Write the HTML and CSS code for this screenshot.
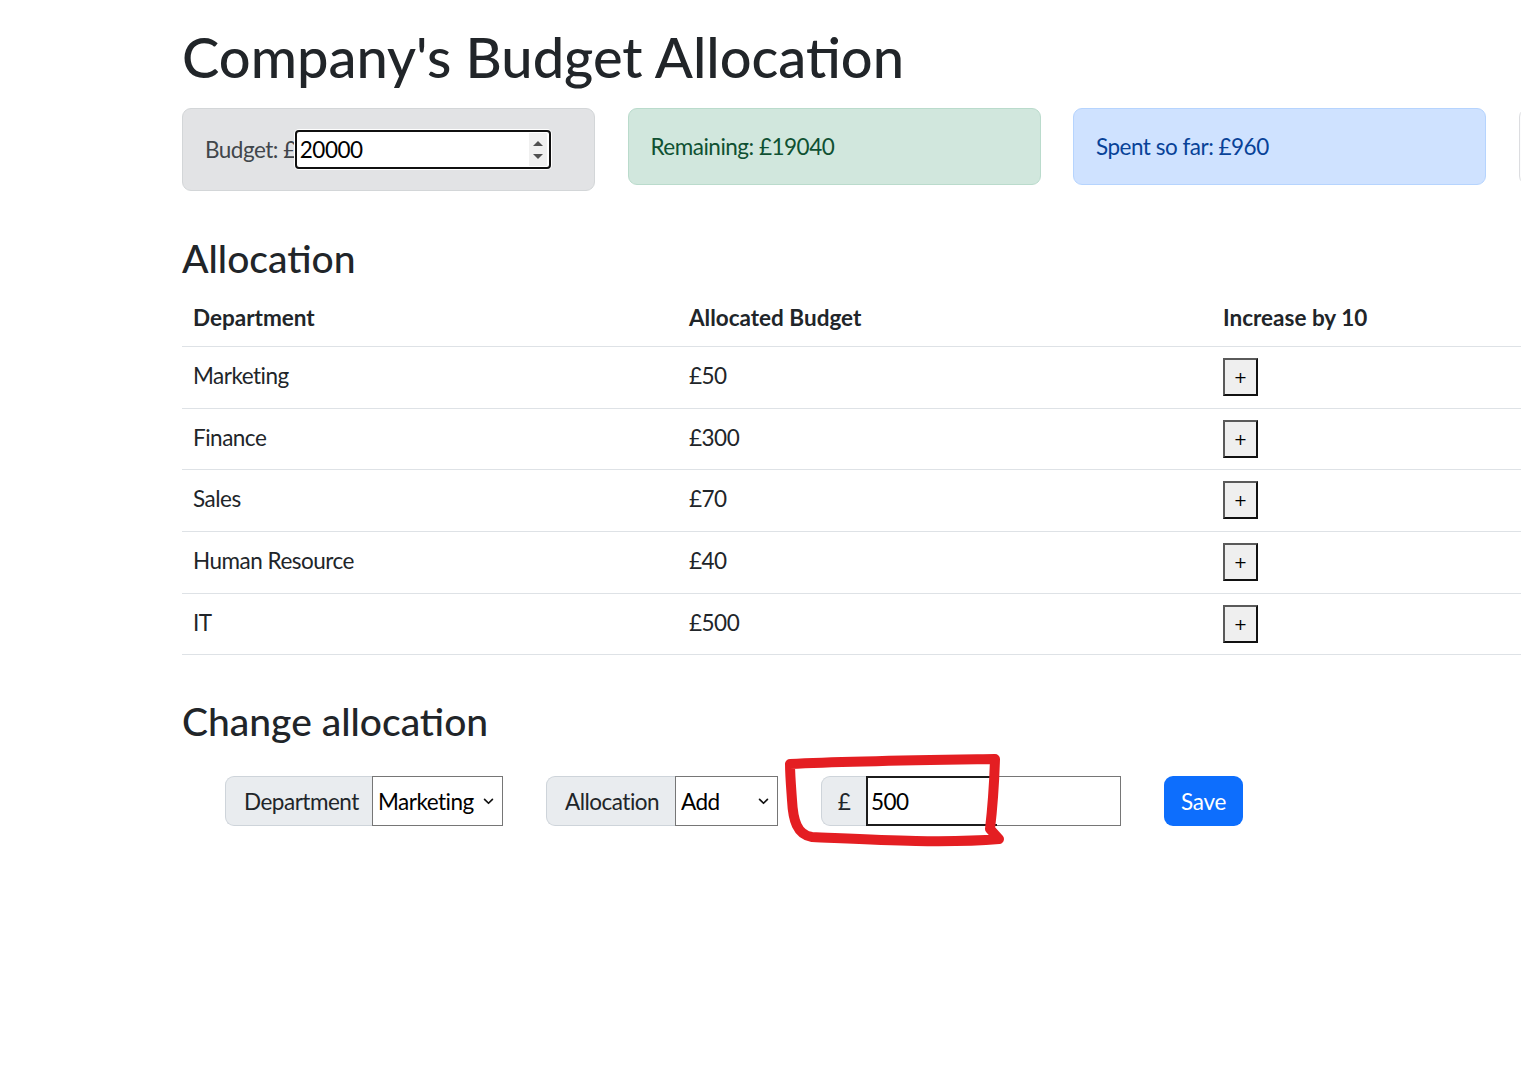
FILE: index.html
```html
<!DOCTYPE html>
<html lang="en">
<head>
<meta charset="utf-8">
<title>Company's Budget Allocation</title>
<link rel="stylesheet" href="styles.css">
</head>
<body>
<div class="page">
  <h1 class="title">Company's Budget Allocation</h1>

  <div class="cards">
    <div class="card card-budget">
      <span class="card-label">Budget: £</span>
      <span class="num-wrap">
        <input class="num-input" type="text" value="20000">
        <span class="spinner"><span class="tri-up"></span><span class="tri-down"></span></span>
      </span>
    </div>
    <div class="card card-remaining">Remaining: £19040</div>
    <div class="card card-spent">Spent so far: £960</div>
    <div class="card card-extra"></div>
  </div>

  <h3 class="section">Allocation</h3>
  <table class="alloc">
    <thead>
      <tr><th class="c1">Department</th><th class="c2">Allocated Budget</th><th class="c3">Increase by 10</th></tr>
    </thead>
    <tbody>
      <tr><td>Marketing</td><td>£50</td><td><button class="plus">+</button></td></tr>
      <tr><td>Finance</td><td>£300</td><td><button class="plus">+</button></td></tr>
      <tr><td>Sales</td><td>£70</td><td><button class="plus">+</button></td></tr>
      <tr><td>Human Resource</td><td>£40</td><td><button class="plus">+</button></td></tr>
      <tr><td>IT</td><td>£500</td><td><button class="plus">+</button></td></tr>
    </tbody>
  </table>

  <h3 class="section section-change">Change allocation</h3>
  <div class="form-row">
    <div class="igroup">
      <span class="ig-text ig-dept">Department</span>
      <span class="sel-wrap sel-dept">
        <select class="sel"><option>Marketing</option></select>
        <svg class="chev" viewBox="0 0 12 8" width="11" height="7"><path d="M1.5 1.5 L6 6 L10.5 1.5" fill="none" stroke="#111" stroke-width="1.9" stroke-linecap="round" stroke-linejoin="round"/></svg>
      </span>
    </div>
    <div class="igroup">
      <span class="ig-text ig-alloc">Allocation</span>
      <span class="sel-wrap sel-alloc">
        <select class="sel"><option>Add</option></select>
        <svg class="chev" viewBox="0 0 12 8" width="11" height="7"><path d="M1.5 1.5 L6 6 L10.5 1.5" fill="none" stroke="#111" stroke-width="1.9" stroke-linecap="round" stroke-linejoin="round"/></svg>
      </span>
    </div>
    <div class="igroup">
      <span class="ig-text ig-pound">£</span>
      <span class="amt-wrap"><input class="amt" type="text" value="500"></span>
    </div>
    <button class="save">Save</button>
  </div>
</div>

<svg class="mark" width="1521" height="1073" viewBox="0 0 1521 1073">
  <path d="M790 764 C850 761 930 760 995 759 C994 790 992 812 990 829 L999 839 C940 844 860 839 812 837 C797 835 793 820 792 800 C791 786 790 774 790 764" fill="none" stroke="#e41e22" stroke-width="10" stroke-linecap="round" stroke-linejoin="round"/>
</svg>
</body>
</html>
```

FILE: styles.css
```css
html, body {
  margin: 0;
  padding: 0;
}
body {
  font-family: Lato, "Noto Sans", sans-serif;
  color: #212529;
  background: #fff;
  overflow: hidden;
  width: 1521px;
  height: 1073px;
  position: relative;
}
.page {
  padding-left: 182px;
}
.title {
  font-size: 56px;
  font-weight: 500;
  line-height: 1.2;
  margin: 23px 0 0 0;
  white-space: nowrap;
}
.cards {
  display: flex;
  align-items: flex-start;
  gap: 32.5px;
  margin-top: 18px;
  width: 2000px;
}
.card {
  flex: 0 0 413px;
  box-sizing: border-box;
  height: 77px;
  border: 1px solid;
  border-radius: 9px;
  display: flex;
  align-items: center;
  padding: 0 22px;
  font-size: 22.5px;
  letter-spacing: -0.5px;
  line-height: 36px;
}
.card-budget {
  height: 83px;
  background: #e2e3e5;
  border-color: #d3d6d8;
  color: #41464b;
}
.card-remaining {
  background: #d1e7dd;
  border-color: #badbcc;
  color: #0f5132;
}
.card-spent {
  background: #cfe2ff;
  border-color: #b6d4fe;
  color: #084298;
}
.card-extra {
  background: #fcfcfd;
  border-color: #dcdde0;
}
.card-label {
  white-space: nowrap;
}
.num-wrap {
  position: relative;
  display: inline-block;
  margin-left: -1px;
  border-radius: 4px;
  box-shadow: 0 0 0 1px #fff;
}
.num-input {
  box-sizing: border-box;
  width: 256px;
  height: 39px;
  border: 2px solid #101010;
  border-radius: 4px;
  background: #fff;
  padding: 0 3px;
  font-family: inherit;
  font-size: 22.5px;
  letter-spacing: -0.5px;
  color: #000;
  outline: none;
  display: block;
}
.spinner {
  position: absolute;
  right: 4px;
  top: 3px;
  bottom: 3px;
  width: 18px;
  background: #f0f0f0;
  display: flex;
  flex-direction: column;
  align-items: center;
  justify-content: center;
  gap: 8px;
}
.tri-up {
  width: 0;
  height: 0;
  border-left: 5px solid transparent;
  border-right: 5px solid transparent;
  border-bottom: 5px solid #505050;
}
.tri-down {
  width: 0;
  height: 0;
  border-left: 5px solid transparent;
  border-right: 5px solid transparent;
  border-top: 5px solid #505050;
}
.section {
  font-size: 39px;
  font-weight: 500;
  line-height: 1.2;
  margin: 43.5px 0 3.7px 0;
}
.section-change {
  margin: 42.5px 0 0 0;
}
.alloc {
  border-collapse: collapse;
  width: 1700px;
  font-size: 22.5px;
  line-height: 36px;
  text-align: left;
}
.alloc th, .alloc td {
  border-bottom: 1px solid #dee2e6;
  vertical-align: top;
}
.alloc th {
  font-weight: 700;
  padding: 15px 11px 10px 11px;
}
.alloc td {
  padding: 11px 11px 11.6px 11px;
  letter-spacing: -0.5px;
}
.c1 { width: 474px; }
.c2 { width: 512px; }
.plus {
  box-sizing: border-box;
  width: 35px;
  height: 38px;
  margin: 0;
  padding: 2px 0 0 0;
  background: #efefef;
  border: 2px solid;
  border-color: #5a5a5a #111 #111 #5a5a5a;
  font-family: "DejaVu Sans", sans-serif;
  font-size: 16px;
  font-weight: 400;
  line-height: 30px;
  color: #000;
  display: block;
}
.form-row {
  display: flex;
  align-items: center;
  gap: 43px;
  margin-top: 31.7px;
  padding-left: 43px;
}
.form-row > * {
  flex-shrink: 0;
}
.igroup {
  display: flex;
  height: 50px;
}
.ig-text {
  box-sizing: border-box;
  height: 50px;
  display: flex;
  align-items: center;
  padding: 0 16px 0 18px;
  background: #e9ecef;
  border: 1px solid #ced4da;
  border-right: none;
  border-radius: 9px 0 0 9px;
  font-size: 22.5px;
  letter-spacing: -0.5px;
  color: #212529;
  white-space: nowrap;
}
.ig-dept { width: 147px; }
.ig-alloc { width: 129px; }
.ig-pound {
  width: 45px;
  justify-content: center;
  padding: 0;
}
.sel-wrap {
  position: relative;
  display: block;
}
.sel {
  box-sizing: border-box;
  height: 50px;
  border: 1px solid #767676;
  border-radius: 0;
  background: #fff;
  font-family: inherit;
  font-size: 22.5px;
  letter-spacing: -0.5px;
  color: #000;
  padding: 0 0 0 5px;
  -webkit-appearance: none;
  appearance: none;
  outline: none;
  display: block;
}
.sel-dept .sel { width: 131px; }
.sel-alloc .sel { width: 103px; }
.chev {
  position: absolute;
  top: 22px;
  right: 9px;
  pointer-events: none;
}
.amt-wrap {
  position: relative;
  display: block;
}
.amt-wrap::after {
  content: "";
  position: absolute;
  left: 0;
  top: 0;
  width: 131px;
  height: 50px;
  box-sizing: border-box;
  border: 2px solid #1c1c1c;
  border-right: none;
  pointer-events: none;
}
.amt {
  box-sizing: border-box;
  width: 255px;
  height: 50px;
  border: 1px solid #767676;
  border-radius: 0;
  background: #fff;
  font-family: inherit;
  font-size: 22.5px;
  letter-spacing: -0.5px;
  color: #000;
  padding: 0 4px;
  outline: none;
  display: block;
}
.save {
  box-sizing: border-box;
  width: 79px;
  height: 50px;
  background: #0d6efd;
  color: #fff;
  border: none;
  border-radius: 9px;
  font-family: inherit;
  font-size: 22.5px;
  letter-spacing: -0.3px;
  padding: 0;
}
.mark {
  position: absolute;
  left: 0;
  top: 0;
  pointer-events: none;
}
```
